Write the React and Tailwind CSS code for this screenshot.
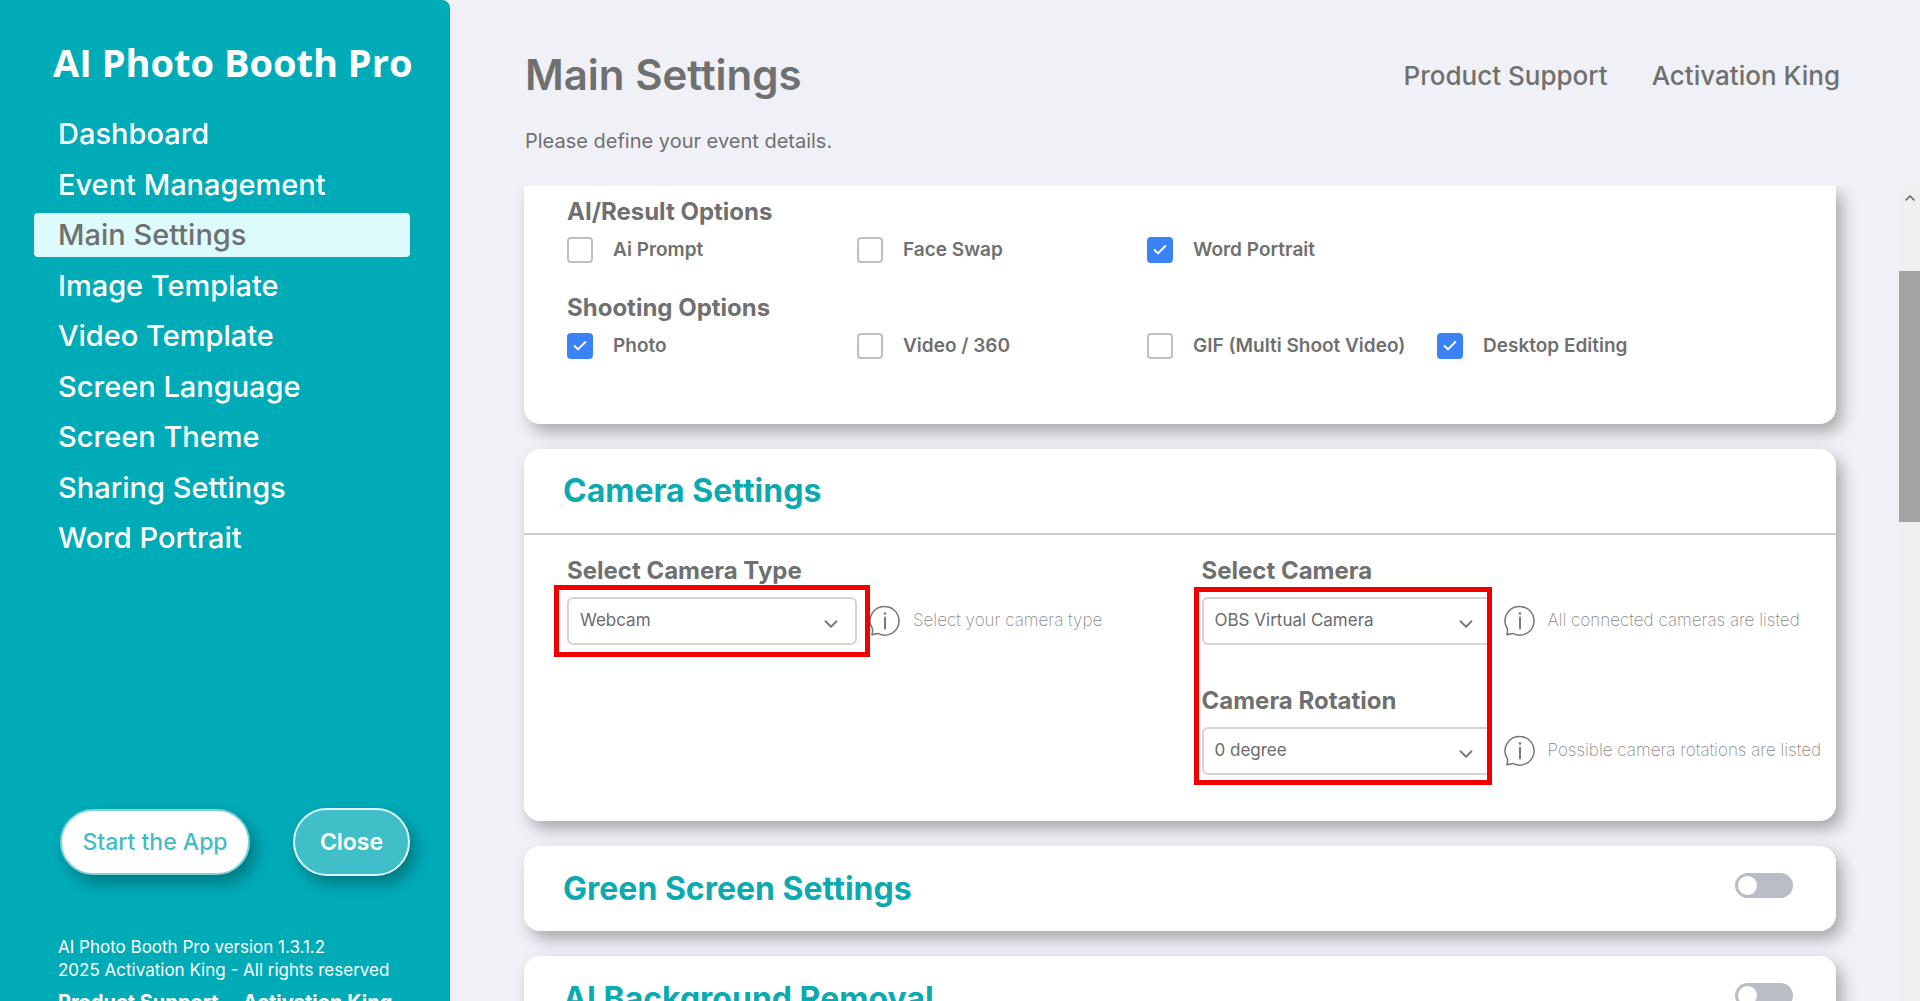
import React, { useState } from 'react';
import { Check, ChevronDown, ChevronUp } from 'lucide-react';

const menuItems = [
  'Dashboard',
  'Event Management',
  'Main Settings',
  'Image Template',
  'Video Template',
  'Screen Language',
  'Screen Theme',
  'Sharing Settings',
  'Word Portrait',
];

const resultOptions = ['Ai Prompt', 'Face Swap', 'Word Portrait'];
const shootingOptions = ['Photo', 'Video / 360', 'GIF (Multi Shoot Video)', 'Desktop Editing'];

const InfoIcon = () => (
  <svg
    className="w-8 h-8 shrink-0 text-[#777]"
    viewBox="0 0 32 32"
    fill="none"
    stroke="currentColor"
    strokeWidth="1.5"
    strokeLinejoin="round"
    aria-hidden="true"
  >
    <path d="M16 1.5a14.3 14.3 0 1 1-7 26.900c-1.800.4-4.300 1.200-6.200 1.300.8-1.900.9-4.400.5-6.200A14.300 14.300 0 0 1 16 1.500z" />
    <path d="M16 12.500v11" strokeWidth="2" strokeLinecap="round" />
    <circle cx="16" cy="8.500" r="1.300" fill="currentColor" stroke="none" />
  </svg>
);

const Checkbox = ({ label, checked, onChange }) => (
  <label className="flex items-center w-[290px] gap-5 whitespace-nowrap cursor-pointer">
    <span className="grid shrink-0">
      <input
        type="checkbox"
        checked={checked}
        onChange={onChange}
        className="col-start-1 row-start-1 appearance-none w-[26px] h-[26px] rounded-sm border-2 border-[#bfbfc2] bg-white checked:bg-[#3b82f6] checked:border-[#3b82f6]"
      />
      {checked && (
        <Check
          className="col-start-1 row-start-1 place-self-center w-4 h-4 text-white pointer-events-none"
          strokeWidth={3}
        />
      )}
    </span>
    <span className="text-[19px] leading-7 font-semibold">{label}</span>
  </label>
);

const SelectField = ({ id, label, options, info, highlighted }) => (
  <div>
    <label htmlFor={id} className="block text-2xl leading-8 font-bold">
      {label}
    </label>
    <div className="flex items-center gap-3 mt-[10px]">
      <div className="relative w-[290px] shrink-0">
        <select
          id={id}
          className="appearance-none w-full h-12 pl-[11px] pr-10 bg-white border-2 border-[#d6d3d4] rounded-md text-[17px] text-[#6b6b6b]"
        >
          {options.map((option) => (
            <option key={option}>{option}</option>
          ))}
        </select>
        <ChevronDown
          className="absolute right-[15px] top-4 w-[22px] h-[22px] text-[#777] pointer-events-none"
          strokeWidth={2}
        />
        {highlighted && (
          <div className="absolute -inset-x-[13px] -inset-y-3 border-[5px] border-[#f20000] pointer-events-none" />
        )}
      </div>
      <InfoIcon />
      <span className="text-[17px] font-extralight text-[#8a8a8a] whitespace-nowrap">{info}</span>
    </div>
  </div>
);

const Toggle = ({ label, checked, onChange }) => (
  <button
    type="button"
    role="switch"
    aria-checked={checked}
    aria-label={label}
    onClick={onChange}
    className={`flex items-center w-[58px] h-[25px] px-[3px] rounded-full ${
      checked ? 'justify-end bg-[#00abb8]' : 'bg-[#b9bdc6]'
    }`}
  >
    <span className="w-[19px] h-[19px] rounded-full bg-white" />
  </button>
);

const ToggleCard = ({ title }) => {
  const [enabled, setEnabled] = useState(false);

  return (
    <section className="flex shrink-0 justify-between items-start h-[85px] pl-[39px] pr-[43px] pt-[27px] bg-white rounded-2xl shadow-[6px_8px_16px_rgba(0,0,0,0.3)]">
      <h2 className="text-[32px] leading-8 font-bold text-[#0ba9b0]">{title}</h2>
      <Toggle label={title} checked={enabled} onChange={() => setEnabled(!enabled)} />
    </section>
  );
};

const App = () => {
  const [activeItem, setActiveItem] = useState('Main Settings');
  const [selected, setSelected] = useState(['Word Portrait', 'Photo', 'Desktop Editing']);

  const toggleOption = (option) => {
    setSelected((prev) =>
      prev.includes(option) ? prev.filter((item) => item !== option) : [...prev, option]
    );
  };

  return (
    <div className="flex h-screen overflow-hidden bg-[#f0f1f6] font-['Inter',sans-serif] text-[#6f706f]">
      {/* Sidebar */}
      <aside className="flex flex-col w-[450px] shrink-0 rounded-tr-lg bg-[#00abb8] text-white overflow-hidden">
        <div className="px-[53px] pt-[34px] text-[38px] leading-[56px] font-bold font-['Open_Sans',sans-serif] whitespace-nowrap">
          AI Photo Booth Pro
        </div>
        <nav className="flex flex-col justify-between h-[448px] pl-[34px] pr-10 mt-[22px]">
          {menuItems.map((item) => (
            <a
              key={item}
              href="#"
              onClick={(e) => {
                e.preventDefault();
                setActiveItem(item);
              }}
              className={`flex items-center h-11 pl-6 rounded text-[29px] font-medium ${
                activeItem === item ? 'bg-[#ddfbfc] text-[#6f706f]' : ''
              }`}
            >
              {item}
            </a>
          ))}
        </nav>

        <div className="flex items-center justify-between pl-[60px] pr-10 mt-auto">
          <button className="w-[190px] h-[66px] rounded-full border-2 border-[#7fd2d8] bg-white text-[#3fbec7] text-[23px] font-medium shadow-[6px_8px_16px_rgba(0,0,0,0.3)]">
            Start the App
          </button>
          <button className="w-[117px] h-[68px] rounded-full border-2 border-[#dff9fa] bg-[#40bfc9] text-[23px] font-semibold shadow-[6px_8px_16px_rgba(0,0,0,0.3)]">
            Close
          </button>
        </div>

        <footer className="pl-[58px] mt-[60px] h-[65px] text-[17px] leading-[23px] whitespace-nowrap">
          <p>AI Photo Booth Pro version 1.3.1.2</p>
          <p>2025 Activation King - All rights reserved</p>
          <div className="flex gap-6 mt-2 text-xl leading-6 font-bold">
            <a href="#">Product Support</a>
            <a href="#">Activation King</a>
          </div>
        </footer>
      </aside>

      <main className="flex flex-col flex-1 min-w-0">
        {/* Page header */}
        <header className="h-[186px] shrink-0 pl-[75px] pr-20 pt-[47px]">
          <div className="flex items-center justify-between">
            <h1 className="text-[42px] leading-[56px] font-semibold">Main Settings</h1>
            <div className="flex gap-11 text-[26px] font-medium">
              <a href="#">Product Support</a>
              <a href="#">Activation King</a>
            </div>
          </div>
          <p className="mt-6 text-xl leading-7">Please define your event details.</p>
        </header>

        <div className="flex flex-1 min-h-0">
          <div className="flex flex-col gap-[25px] flex-1 min-w-0 pl-[74px] pr-[63px] overflow-hidden">
            {/* Options */}
            <section className="shrink-0 pl-[43px] pt-[10px] pb-[64px] bg-white rounded-b-2xl shadow-[6px_8px_16px_rgba(0,0,0,0.3)]">
              <h3 className="text-2xl leading-8 font-bold">AI/Result Options</h3>
              <div className="flex flex-wrap mt-2">
                {resultOptions.map((option) => (
                  <Checkbox
                    key={option}
                    label={option}
                    checked={selected.includes(option)}
                    onChange={() => toggleOption(option)}
                  />
                ))}
              </div>
              <h3 className="mt-7 text-2xl leading-8 font-bold">Shooting Options</h3>
              <div className="flex flex-wrap mt-2">
                {shootingOptions.map((option) => (
                  <Checkbox
                    key={option}
                    label={option}
                    checked={selected.includes(option)}
                    onChange={() => toggleOption(option)}
                  />
                ))}
              </div>
            </section>

            {/* Camera */}
            <section className="shrink-0 bg-white rounded-2xl shadow-[6px_8px_16px_rgba(0,0,0,0.3)]">
              <h2 className="pl-[39px] py-[26px] border-b-2 border-[#cfcfd1] text-[32px] leading-8 font-bold text-[#0ba9b0]">
                Camera Settings
              </h2>
              <div className="grid grid-cols-2 pl-[43px] pt-5 pb-[46px]">
                <SelectField
                  id="camera-type"
                  label="Select Camera Type"
                  options={['Webcam']}
                  info="Select your camera type"
                  highlighted
                />
                <div className="relative flex flex-col gap-10">
                  <SelectField
                    id="camera"
                    label="Select Camera"
                    options={['OBS Virtual Camera']}
                    info="All connected cameras are listed"
                  />
                  <SelectField
                    id="camera-rotation"
                    label="Camera Rotation"
                    options={['0 degree', '90 degree', '180 degree', '270 degree']}
                    info="Possible camera rotations are listed"
                  />
                  <div className="absolute -left-2 w-[298px] top-8 -bottom-[10px] border-[5px] border-[#f20000] pointer-events-none" />
                </div>
              </div>
            </section>

            <ToggleCard title="Green Screen Settings" />
            <ToggleCard title="AI Background Removal" />
          </div>

          {/* Scrollbar */}
          <div className="w-[21px] shrink-0 bg-[#f0f0ef]">
            <div className="flex items-center justify-center h-[85px] pb-[62px]">
              <ChevronUp className="w-4 h-4 text-[#555]" strokeWidth={2} />
            </div>
            <div className="h-[251px] bg-[#a3a3a3]" />
          </div>
        </div>
      </main>
    </div>
  );
};

export default App;
